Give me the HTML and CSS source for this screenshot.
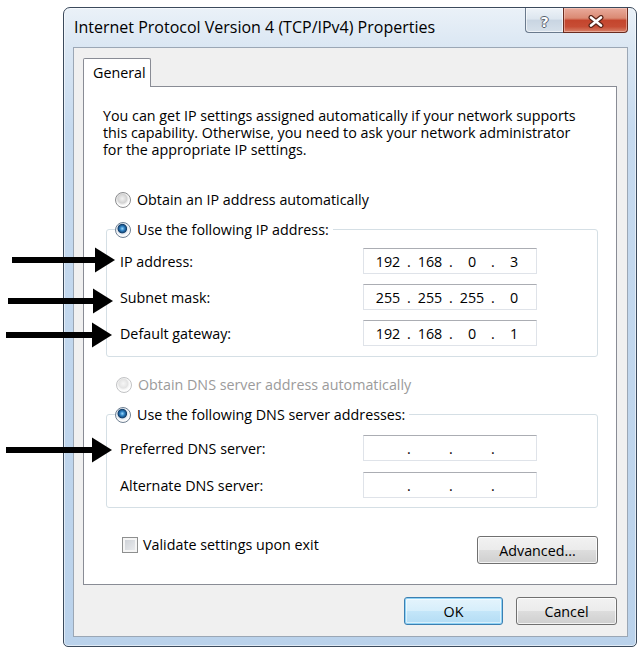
FILE: index.html
```html
<!DOCTYPE html>
<html lang="en">
<head>
<meta charset="utf-8">
<title>Internet Protocol Version 4 (TCP/IPv4) Properties</title>
<link rel="stylesheet" href="styles.css">
</head>
<body>
<div class="stage">
  <div class="window">
    <div class="titlebar">
      <span class="title">Internet Protocol Version 4 (TCP/IPv4) Properties</span>
      <div class="caption">
        <span class="cap-btn help">?</span>
        <span class="cap-btn close">
          <svg width="18" height="13" viewBox="0 0 18 13">
            <path d="M4 2.5 L14 10.5 M14 2.5 L4 10.5" stroke="#5a2418" stroke-width="5" stroke-linecap="round" fill="none"/>
            <path d="M4 2.5 L14 10.5 M14 2.5 L4 10.5" stroke="#ffffff" stroke-width="2.6" stroke-linecap="round" fill="none"/>
          </svg>
        </span>
      </div>
    </div>
    <div class="client">
      <div class="tabs"><span class="tab">General</span></div>
      <div class="panel">
        <p class="desc">You can get IP settings assigned automatically if your network supports<br>this capability. Otherwise, you need to ask your network administrator<br>for the appropriate IP settings.</p>
        <div class="option option-ip"><span class="radio"></span><span>Obtain an IP address automatically</span></div>
        <fieldset class="group group-ip">
          <legend class="option"><span class="radio checked"></span><span>Use the following IP address:</span></legend>
          <div class="fields">
            <span class="field-label">IP address:</span>
            <div class="ipbox"><span>192</span><span>.</span><span>168</span><span>.</span><span>0</span><span>.</span><span>3</span></div>
            <span class="field-label">Subnet mask:</span>
            <div class="ipbox"><span>255</span><span>.</span><span>255</span><span>.</span><span>255</span><span>.</span><span>0</span></div>
            <span class="field-label">Default gateway:</span>
            <div class="ipbox"><span>192</span><span>.</span><span>168</span><span>.</span><span>0</span><span>.</span><span>1</span></div>
          </div>
        </fieldset>
        <div class="option option-dns disabled"><span class="radio"></span><span>Obtain DNS server address automatically</span></div>
        <fieldset class="group group-dns">
          <legend class="option"><span class="radio checked"></span><span>Use the following DNS server addresses:</span></legend>
          <div class="fields">
            <span class="field-label">Preferred DNS server:</span>
            <div class="ipbox"><span></span><span>.</span><span></span><span>.</span><span></span><span>.</span><span></span></div>
            <span class="field-label">Alternate DNS server:</span>
            <div class="ipbox"><span></span><span>.</span><span></span><span>.</span><span></span><span>.</span><span></span></div>
          </div>
        </fieldset>
        <div class="bottom-row">
          <label class="check"><span class="checkbox"></span><span>Validate settings upon exit</span></label>
          <button class="btn btn-adv">Advanced...</button>
        </div>
      </div>
      <div class="actions">
        <button class="btn btn-ok">OK</button>
        <button class="btn btn-cancel">Cancel</button>
      </div>
    </div>
  </div>

  <svg class="arrow arrow-1" width="103" height="26" viewBox="0 0 103 26"><rect x="0" y="10" width="84" height="6"/><polygon points="83,0.5 103,13 83,25.5"/></svg>
  <svg class="arrow arrow-2" width="105" height="26" viewBox="0 0 105 26"><rect x="0" y="10" width="86" height="6"/><polygon points="85,0.5 105,13 85,25.5"/></svg>
  <svg class="arrow arrow-3" width="106" height="26" viewBox="0 0 106 26"><rect x="0" y="10" width="87" height="6"/><polygon points="86,0.5 106,13 86,25.5"/></svg>
  <svg class="arrow arrow-4" width="106" height="26" viewBox="0 0 106 26"><rect x="0" y="10" width="87" height="6"/><polygon points="86,0.5 106,13 86,25.5"/></svg>
</div>
</body>
</html>
```
FILE: styles.css
```css
body {
  margin: 0;
  background: #fff;
  font-family: "Open Sans", "Noto Sans", sans-serif;
  font-size: 14.3px;
  color: #000;
}

.stage {
  position: relative;
  width: 640px;
  height: 648px;
  overflow: hidden;
}

.window {
  box-sizing: border-box;
  width: 574px;
  height: 640px;
  margin: 7px 0 0 63px;
  border: 1px solid #3b4a5c;
  border-radius: 7px 7px 5px 5px;
  padding: 0 8px 9px 9px;
  background: linear-gradient(#eaf1f8, #dbe7f3 38px, #c6daef 120px, #bad2eb);
  box-shadow: inset 0 0 0 1px rgba(255, 255, 255, 0.55);
  display: flex;
  flex-direction: column;
}

.titlebar {
  height: 39px;
  display: flex;
  justify-content: space-between;
  align-items: flex-start;
}

.title {
  font-size: 16px;
  line-height: 39px;
  margin-left: 1px;
  white-space: nowrap;
}

.caption {
  display: flex;
}

.cap-btn {
  box-sizing: border-box;
  height: 25px;
  display: flex;
  align-items: center;
  justify-content: center;
  padding-top: 3px;
}

.help {
  width: 38px;
  border: 1px solid #6a7a8d;
  border-top: none;
  border-right: none;
  border-radius: 0 0 0 4px;
  background: linear-gradient(#eef3f8, #dde6ef 45%, #c9d5e2 52%, #d6e0ea);
  box-shadow: inset 0 0 0 1px rgba(255, 255, 255, 0.6);
  color: #fff;
  font-family: "DejaVu Sans", sans-serif;
  font-weight: bold;
  font-size: 14px;
  line-height: 1;
  text-shadow: 1px 0 #56616e, -1px 0 #56616e, 0 1px #56616e, 0 -1px #56616e;
}

.close {
  width: 65px;
  border: 1px solid #6a2c20;
  border-top: none;
  border-radius: 0 0 4px 0;
  background: linear-gradient(#e9ab9c, #da8a74 42%, #c4452d 52%, #c74d35 78%, #d8836a);
  box-shadow: inset 0 0 0 1px rgba(255, 220, 210, 0.45);
}

.client {
  flex: 1;
  box-sizing: border-box;
  border: 1px solid #9ba7b5;
  background: #f0f0f0;
  padding: 10px 10px 11px 9px;
  display: flex;
  flex-direction: column;
}

.tabs {
  display: flex;
}

.tab {
  box-sizing: border-box;
  width: 68px;
  height: 29px;
  margin-bottom: -1px;
  border: 1px solid #898c95;
  border-bottom: none;
  border-radius: 2px 2px 0 0;
  background: #fff;
  padding-left: 9px;
  line-height: 27px;
  position: relative;
  z-index: 1;
}

.panel {
  flex: 1;
  box-sizing: border-box;
  border: 1px solid #898c95;
  background: #fff;
  padding: 20px 18px 20px 19px;
  display: flex;
  flex-direction: column;
}

.desc {
  margin: 0;
  line-height: 17px;
  white-space: nowrap;
}

.option {
  display: flex;
  align-items: center;
  gap: 6px;
  line-height: 17px;
  white-space: nowrap;
}

.option-ip {
  margin: 33px 0 0 12px;
}

.option-dns {
  margin: 19px 0 0 13px;
}

.disabled {
  color: #9b9b9b;
}

.radio {
  flex: none;
  box-sizing: border-box;
  width: 16px;
  height: 16px;
  border-radius: 50%;
  border: 1px solid #8a8b8d;
  background: radial-gradient(circle at 45% 40%, #f2f2f2 0, #d2d2d2 4.5px, #e9e9e9 5.5px, #fdfdfd 7px);
}

.radio.checked {
  border-color: #6e7f92;
  background: radial-gradient(circle at 45% 40%, #9ad8fb 0, #2f82c4 2.2px, #123f6c 4.3px, #dfe6ee 5.2px, #fbfbfb 7px);
}

.disabled .radio {
  border-color: #c2c3c5;
  background: radial-gradient(circle at 45% 40%, #f6f6f6 0, #e3e3e3 4.5px, #f2f2f2 5.5px, #fdfdfd 7px);
}

.group {
  margin: 13px 0 0 3px;
  border: 1px solid #d5dfe5;
  border-radius: 3px;
  padding: 10px 0 10px 8px;
  min-width: 0;
}

.group legend {
  padding: 0 4px 0 0;
}

.group-dns {
  padding-top: 12px;
  padding-bottom: 9px;
}

.fields {
  display: grid;
  grid-template-columns: 243px 174px;
  grid-auto-rows: 26px;
  row-gap: 10px;
  align-items: center;
  margin-left: 5px;
}

.group-dns .fields {
  row-gap: 11px;
}

.field-label {
  line-height: 17px;
}

.ipbox {
  box-sizing: border-box;
  height: 26px;
  border: 1px solid #dfe3e9;
  border-top-color: #abadb3;
  background: #fff;
  display: grid;
  grid-template-columns: 34px 8px 34px 8px 34px 8px 34px;
  justify-items: center;
  align-items: center;
  padding-left: 7px;
  line-height: 17px;
}

.bottom-row {
  margin-top: auto;
  display: flex;
  justify-content: space-between;
  align-items: flex-start;
}

.check {
  display: flex;
  align-items: center;
  gap: 5px;
  margin-left: 19px;
  line-height: 17px;
}

.checkbox {
  flex: none;
  box-sizing: border-box;
  width: 16px;
  height: 16px;
  border: 1px solid #8e8f8f;
  background: linear-gradient(135deg, #c9cdd3, #eeeff1);
  box-shadow: inset 0 0 0 2px #f5f5f5;
}

.btn {
  box-sizing: border-box;
  height: 28px;
  padding: 0;
  border: 1px solid #707070;
  border-radius: 3px;
  background: linear-gradient(#f2f2f2, #ebebeb 50%, #dddddd 50%, #cfcfcf);
  box-shadow: inset 0 0 0 1px rgba(255, 255, 255, 0.75);
  font: inherit;
  color: #000;
}

.btn-adv {
  width: 121px;
}

.actions {
  display: flex;
  justify-content: flex-end;
  gap: 13px;
  margin-top: 12px;
}

.btn-ok {
  width: 99px;
  border-color: #3c7fb1;
  background: linear-gradient(#e5f4fc, #d6eefb 50%, #c4e6f9 50%, #b3dcf4);
  box-shadow: inset 0 0 0 1px #8fd3f6, inset 0 0 0 2px rgba(255, 255, 255, 0.5);
}

.btn-cancel {
  width: 101px;
}

.arrow {
  position: absolute;
  fill: #000;
}

.arrow-1 { left: 12px; top: 247px; }
.arrow-2 { left: 8px; top: 288px; }
.arrow-3 { left: 6px; top: 322px; }
.arrow-4 { left: 6px; top: 437px; }
```
